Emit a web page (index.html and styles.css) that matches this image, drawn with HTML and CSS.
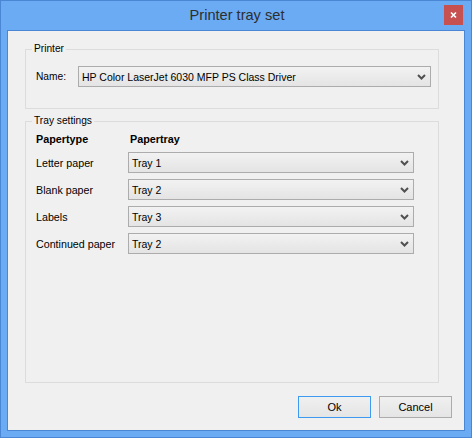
FILE: index.html
```html
<!DOCTYPE html>
<html>
<head>
<meta charset="utf-8">
<title>Printer tray set</title>
<link rel="stylesheet" href="styles.css">
</head>
<body>
<div class="window">
  <div class="titlebar">
    <span class="title">Printer tray set</span>
    <div class="close">
      <svg width="7" height="6" viewBox="0 0 7 6"><path d="M1 0.5 L6 5.5 M6 0.5 L1 5.5" stroke="#fff" stroke-width="1.6" fill="none"/></svg>
    </div>
  </div>
  <div class="client">
    <div class="group printer">
      <span class="legend">Printer</span>
      <div class="name-row">
        <span class="label">Name:</span>
        <div class="combo wide"><span>HP Color LaserJet 6030 MFP PS Class Driver</span><svg class="chev" width="9" height="6" viewBox="0 0 9 6"><polyline points="1,1 4.5,4.5 8,1" stroke="#505050" stroke-width="2" fill="none"/></svg></div>
      </div>
    </div>
    <div class="group tray">
      <span class="legend">Tray settings</span>
      <div class="tray-grid">
        <div class="hdr">Papertype</div>
        <div class="hdr hdr2">Papertray</div>
        <div class="label">Letter paper</div>
        <div class="combo"><span>Tray 1</span><svg class="chev" width="9" height="6" viewBox="0 0 9 6"><polyline points="1,1 4.5,4.5 8,1" stroke="#505050" stroke-width="2" fill="none"/></svg></div>
        <div class="label">Blank paper</div>
        <div class="combo"><span>Tray 2</span><svg class="chev" width="9" height="6" viewBox="0 0 9 6"><polyline points="1,1 4.5,4.5 8,1" stroke="#505050" stroke-width="2" fill="none"/></svg></div>
        <div class="label">Labels</div>
        <div class="combo"><span>Tray 3</span><svg class="chev" width="9" height="6" viewBox="0 0 9 6"><polyline points="1,1 4.5,4.5 8,1" stroke="#505050" stroke-width="2" fill="none"/></svg></div>
        <div class="label">Continued paper</div>
        <div class="combo"><span>Tray 2</span><svg class="chev" width="9" height="6" viewBox="0 0 9 6"><polyline points="1,1 4.5,4.5 8,1" stroke="#505050" stroke-width="2" fill="none"/></svg></div>
      </div>
    </div>
    <div class="buttons">
      <div class="btn default">Ok</div>
      <div class="btn">Cancel</div>
    </div>
  </div>
</div>
</body>
</html>
```
FILE: styles.css
```css
* { box-sizing: border-box; }
html, body { margin: 0; padding: 0; }
body {
  width: 472px;
  height: 438px;
  font-family: "Liberation Sans", Arial, sans-serif;
  font-size: 10.5px;
  color: #000;
  background: #6aabf4;
}
.window {
  width: 472px;
  height: 438px;
  background: #6aabf4;
  border: 1px solid #4a86d4;
}
.titlebar {
  height: 29px;
  display: grid;
  grid-template-columns: 1fr auto 1fr;
  align-items: start;
}
.title {
  grid-column: 2;
  font-size: 14.6px;
  line-height: 29px;
  color: #2e2e2e;
  padding-left: 2px;
}
.close {
  grid-column: 3;
  justify-self: end;
  margin: 4px 8px 0 0;
  width: 19px;
  height: 20px;
  background: #c75050;
  display: flex;
  align-items: center;
  justify-content: center;
}
.client {
  margin: 0 6px;
  height: 401px;
  border: 1px solid #4a86d4;
  background: #f0f0f0;
  padding: 18px 12px 0 17px;
}
.group {
  position: relative;
  width: 414px;
  border: 1px solid #dcdcdc;
}
.printer { height: 60px; }
.tray { height: 262px; margin-top: 12px; }
.legend {
  position: absolute;
  top: -7px;
  left: 6px;
  padding: 0 2px;
  background: #f0f0f0;
  line-height: 12px;
  font-size: 10.2px;
}
.name-row {
  display: flex;
  align-items: center;
  padding: 16px 0 0 10px;
}
.name-row .label {
  width: 42px;
  font-size: 10.2px;
}
.combo {
  height: 21px;
  border: 1px solid #acacac;
  background: linear-gradient(#f2f2f2, #e4e4e4);
  display: flex;
  align-items: center;
  justify-content: space-between;
  padding: 0 4px 0 3px;
  font-size: 10.5px;
}
.combo.wide { width: 353px; }
.chev { display: block; }
.tray-grid {
  display: grid;
  grid-template-columns: 92px 286px;
  grid-template-rows: 14px repeat(4, 21px);
  row-gap: 6px;
  padding: 10px 0 0 10px;
  align-items: center;
}
.hdr {
  font-weight: bold;
  font-size: 10.8px;
  line-height: 14px;
}
.hdr2 { padding-left: 2px; }
.tray-grid .label { font-size: 10.7px; }
.buttons {
  display: flex;
  justify-content: flex-end;
  gap: 8px;
  margin-top: 13px;
}
.btn {
  width: 73px;
  height: 22px;
  border: 1px solid #acacac;
  background: linear-gradient(#f0f0f0, #e5e5e5);
  display: flex;
  align-items: center;
  justify-content: center;
  font-size: 11px;
}
.btn.default { border-color: #3c9af0; }
```
